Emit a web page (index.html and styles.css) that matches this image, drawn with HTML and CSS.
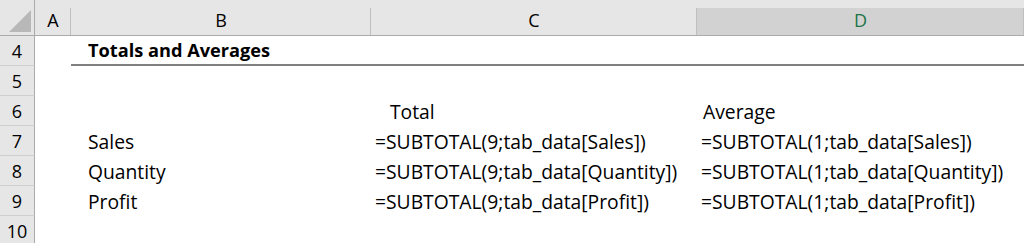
FILE: index.html
```html
<!DOCTYPE html>
<html lang="en">
<head>
    <meta charset="UTF-8">
    <title>Totals and Averages</title>
    <link rel="stylesheet" href="styles.css">
</head>
<body>
    <div class="sheet">
        <!-- column headers -->
        <div class="corner"><span class="tri"></span></div>
        <div class="col-head">A</div>
        <div class="col-head">B</div>
        <div class="col-head">C</div>
        <div class="col-head active">D</div>

        <div class="row-head">4</div>
        <div class="cell"></div>
        <div class="cell title">Totals and Averages</div>
        <div class="cell title-line"></div>
        <div class="cell title-line"></div>

        <div class="row-head">5</div>
        <div class="cell"></div>
        <div class="cell"></div>
        <div class="cell"></div>
        <div class="cell"></div>

        <div class="row-head">6</div>
        <div class="cell"></div>
        <div class="cell"></div>
        <div class="cell label-c">Total</div>
        <div class="cell label-d">Average</div>

        <div class="row-head">7</div>
        <div class="cell"></div>
        <div class="cell indent">Sales</div>
        <div class="cell">=SUBTOTAL(9;tab_data[Sales])</div>
        <div class="cell">=SUBTOTAL(1;tab_data[Sales])</div>

        <div class="row-head">8</div>
        <div class="cell"></div>
        <div class="cell indent">Quantity</div>
        <div class="cell">=SUBTOTAL(9;tab_data[Quantity])</div>
        <div class="cell">=SUBTOTAL(1;tab_data[Quantity])</div>

        <div class="row-head">9</div>
        <div class="cell"></div>
        <div class="cell indent">Profit</div>
        <div class="cell">=SUBTOTAL(9;tab_data[Profit])</div>
        <div class="cell">=SUBTOTAL(1;tab_data[Profit])</div>

        <div class="row-head">10</div>
        <div class="cell"></div>
        <div class="cell"></div>
        <div class="cell"></div>
        <div class="cell"></div>
    </div>
</body>
</html>
```

FILE: styles.css
```css
* {
    margin: 0;
    padding: 0;
    box-sizing: border-box;
}

body {
    font-family: 'Open Sans', 'Liberation Sans', sans-serif;
    background: #fff;
    color: #000;
    width: 1024px;
    height: 243px;
    overflow: hidden;
}

.sheet {
    display: grid;
    grid-template-columns: 35px 36px 300px 326px 327px;
    grid-template-rows: 36px repeat(7, 30px);
    font-size: 18px;
}

.corner {
    background: #e6e6e6;
    border-right: 1px solid #ababab;
    border-bottom: 1px solid #ababab;
    position: relative;
}

.tri {
    position: absolute;
    right: 3px;
    bottom: 3px;
    width: 0;
    height: 0;
    border-left: 22px solid transparent;
    border-bottom: 22px solid #b8b8b8;
}

.col-head {
    background: #e6e6e6;
    border-bottom: 1px solid #ababab;
    display: flex;
    align-items: flex-end;
    justify-content: center;
    padding-bottom: 3px;
    position: relative;
}

.col-head::after {
    content: "";
    position: absolute;
    right: 0;
    top: 8px;
    bottom: 0;
    width: 1px;
    background: #bfbfbf;
}

.col-head.active {
    background: linear-gradient(#e6e6e6 8px, #d2d2d2 8px);
    color: #217346;
}

.row-head {
    background: #e6e6e6;
    border-right: 1px solid #ababab;
    border-bottom: 1px solid #cfcfcf;
    display: flex;
    align-items: center;
    justify-content: center;
}

.cell {
    display: flex;
    align-items: center;
    padding-left: 4px;
    white-space: nowrap;
    font-size: 19.3px;
}

.title {
    font-weight: bold;
    font-size: 18.2px;
    padding-left: 17px;
    border-bottom: 2px solid #808080;
}

.title-line {
    border-bottom: 2px solid #808080;
}

.indent {
    padding-left: 17px;
}

.label-c {
    padding-left: 19px;
}

.label-d {
    padding-left: 6px;
}
```
